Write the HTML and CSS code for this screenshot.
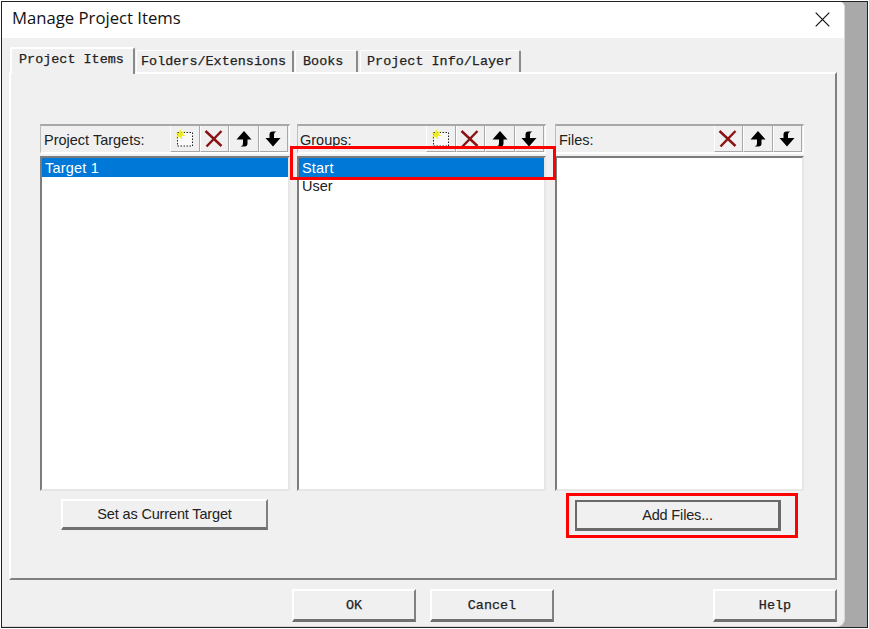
FILE: index.html
```html
<!DOCTYPE html>
<html lang="en">
<head>
<meta charset="utf-8">
<title>Manage Project Items</title>
<link rel="stylesheet" href="styles.css">
</head>
<body>
<svg class="defs" width="0" height="0" aria-hidden="true">
  <symbol id="i-new" viewBox="0 0 20 20">
    <rect x="2.500" y="3.500" width="15" height="13.500" fill="#fafafa" stroke="#222" stroke-dasharray="1.500 1.500"/>
    <path d="M5.500 0l1 3.500 3.500-1.500-2 3 2.500 1.500-3.500.5-.5 3.500-2-3-3.500 1.500 1.500-3.500-2.500-2 3.500.5z" fill="#eeea28"/>
  </symbol>
  <symbol id="i-del" viewBox="0 0 20 20">
    <path d="M1.500 2l16 15M17.500 2l-15 15.500" stroke="#8a1212" stroke-width="2.400" fill="none"/>
  </symbol>
  <symbol id="i-up" viewBox="0 0 16 16">
    <path d="M8 0L15.500 8.500H11.500V12.500Q11.500 15.500 8.500 15.500H4.500Q7 15 7 12V8.500H.5z" fill="#000"/>
  </symbol>
  <symbol id="i-down" viewBox="0 0 16 16">
    <path d="M8 15.500L.5 7H4.500V3.500Q4.500 .5 7.500 .5H11.500Q9 1 9 4V7H15.500z" fill="#000"/>
  </symbol>
</svg>
<div class="frame">
  <div class="dialog">
    <header class="titlebar">
      <span class="title">Manage Project Items</span>
      <svg class="close" width="15" height="15" viewBox="0 0 15 15"><path d="M.7.7l13.600 13.600M14.300.7L.7 14.300" stroke="#111" stroke-width="1.200" fill="none"/></svg>
    </header>
    <div class="body">
      <nav class="tabs">
        <span class="tab active">Project Items</span>
        <span class="tab t-folders">Folders/Extensions</span>
        <span class="tab t-books">Books</span>
        <span class="tab t-info">Project Info/Layer</span>
      </nav>
      <section class="panel">
        <div class="columns">
          <div class="col col-targets">
            <div class="head">
              <span class="head-label">Project Targets:</span>
              <span class="tool"><svg width="20" height="20"><use href="#i-new"/></svg></span>
              <span class="tool"><svg width="20" height="20"><use href="#i-del"/></svg></span>
              <span class="tool"><svg width="16" height="16"><use href="#i-up"/></svg></span>
              <span class="tool"><svg width="16" height="16"><use href="#i-down"/></svg></span>
            </div>
            <ul class="list">
              <li class="selected">Target 1</li>
            </ul>
          </div>
          <div class="col col-groups">
            <div class="head">
              <span class="head-label">Groups:</span>
              <span class="tool"><svg width="20" height="20"><use href="#i-new"/></svg></span>
              <span class="tool"><svg width="20" height="20"><use href="#i-del"/></svg></span>
              <span class="tool"><svg width="16" height="16"><use href="#i-up"/></svg></span>
              <span class="tool"><svg width="16" height="16"><use href="#i-down"/></svg></span>
            </div>
            <ul class="list">
              <li class="selected">Start</li>
              <li>User</li>
            </ul>
          </div>
          <div class="col">
            <div class="head">
              <span class="head-label">Files:</span>
              <span class="tool"><svg width="20" height="20"><use href="#i-del"/></svg></span>
              <span class="tool"><svg width="16" height="16"><use href="#i-up"/></svg></span>
              <span class="tool"><svg width="16" height="16"><use href="#i-down"/></svg></span>
            </div>
            <ul class="list"></ul>
          </div>
        </div>
        <div class="panel-actions">
          <button class="btn btn-target" type="button">Set as Current Target</button>
          <button class="btn btn-add" type="button">Add Files...</button>
        </div>
      </section>
      <footer class="footer">
        <button class="btn mono b-ok" type="button">OK</button>
        <button class="btn mono b-cancel" type="button">Cancel</button>
        <button class="btn mono b-help" type="button">Help</button>
      </footer>
    </div>
  </div>
  <div class="mark mark-group"></div>
  <div class="mark mark-add"></div>
</div>
</body>
</html>
```
FILE: styles.css
```css
* { box-sizing: border-box; }
html, body { margin: 0; padding: 0; background: #fff; }
.defs { position: absolute; }
body { padding: 1px 0 0 1px; font-family: "Liberation Sans", Arial, sans-serif; color: #111; }

.frame {
  position: relative;
  width: 867px;
  height: 627px;
  border: 1px solid #222;
  background: #a9a9a9;
}
.dialog {
  width: 843px;
  height: 625px;
  background: #f0f0f0;
  border-radius: 0 5px 8px 0;
  border-right: 1px solid #d8d8d8;
  border-bottom: 1px solid #d8d8d8;
  overflow: hidden;
}
.titlebar {
  height: 36px;
  background: #fff;
  display: flex;
  align-items: center;
  justify-content: space-between;
  padding: 0 14px 6px 10px;
}
.title { font-family: "Open Sans", "Noto Sans", sans-serif; font-size: 16.700px; color: #111; }
.close { display: block; margin-top: 4px; }

.body { padding: 9px 7px 0; }
.tabs { display: flex; align-items: flex-end; height: 25px; padding-left: 1px; }
.tab {
  font-family: "Liberation Mono", monospace;
  font-size: 13.450px;
  -webkit-text-stroke: .25px #222;
  color: #222;
  background: #f0f0f0;
  height: 22px;
  line-height: 22px;
  border-top: 1px solid #fff;
  border-left: 1px solid #fff;
  border-right: 2px solid #8a8a8a;
  border-radius: 2px 2px 0 0;
  padding-left: 4px;
  white-space: nowrap;
}
.tab.active {
  position: relative;
  z-index: 1;
  width: 125px;
  height: 27px;
  line-height: 22px;
  margin-bottom: -2px;
  padding-left: 7px;
  border-top: 2px solid #fff;
  border-left: 2px solid #fff;
}
.t-folders { width: 158px; margin-left: 1px; }
.t-books { width: 63px; margin-left: 1px; padding-left: 7px; }
.t-info { width: 161px; margin-left: 2px; padding-left: 6px; }

.panel {
  width: 828px;
  height: 508px;
  border-top: 2px solid #fff;
  border-left: 2px solid #fff;
  border-right: 2px solid #808080;
  border-bottom: 2px solid #808080;
  padding: 50px 0 0 29px;
}
.columns { display: flex; }
.col { width: 249px; }
.col-targets { width: 250px; margin-right: 7px; }
.col-groups { margin-right: 9px; }
.head {
  height: 30px;
  display: flex;
  align-items: stretch;
  border-top: 2px solid #a8a8a8;
  border-bottom: 2px solid #fff;
  border-left: 1px solid #bdbdbd;
  border-right: 1px solid #fff;
  padding-right: 1px;
}
.head-label {
  flex: 1;
  font-size: 14.500px;
  line-height: 28px;
  padding-left: 3px;
  color: #222;
}
.col-groups .head-label { padding-left: 2px; }
.tool {
  width: 29.500px;
  display: flex;
  align-items: center;
  justify-content: center;
  border-right: 1px solid #a8a8a8;
  border-left: 1px solid #fff;
  border-bottom: 1px solid #a8a8a8;
}
.tool svg { display: block; }

.list {
  list-style: none;
  margin: 2px 0 0;
  padding: 0;
  height: 335px;
  background: #fff;
  border-top: 2px solid #7c7c7c;
  border-left: 2px solid #7c7c7c;
  border-right: 2px solid #e6e6e6;
  border-bottom: 2px solid #e6e6e6;
  font-size: 14.500px;
  color: #222;
}
.list li { height: 18px; line-height: 18px; padding-left: 3px; }
.list li.selected { height: 19px; background: #0078d7; color: #fff; line-height: 21px; letter-spacing: .2px; }

.panel-actions { display: flex; justify-content: space-between; margin-top: 8px; padding: 0 54px 0 21px; }
.btn {
  display: block;
  margin: 0;
  padding: 0;
  background: #f0f0f0;
  font-family: "Liberation Sans", Arial, sans-serif;
  font-size: 14.500px;
  letter-spacing: -.15px;
  color: #222;
  border-top: 2px solid #fff;
  border-left: 2px solid #fff;
  border-right: 2px solid #808080;
  border-bottom: 3px solid #707070;
}
.btn-target { width: 207px; height: 31px; }
.btn-add { width: 206px; height: 31px; border: 3px solid #6a6a6a; border-top-width: 2px; border-left-width: 2px; margin-top: 1px; }

.footer { display: flex; margin-top: 9px; padding-left: 283px; }
.mono { width: 124px; height: 33px; font-family: "Liberation Mono", monospace; font-size: 13.450px; -webkit-text-stroke: .25px #222; letter-spacing: 0; }
.b-cancel { margin-left: 14px; }
.b-help { margin-left: 159px; }

.mark { position: absolute; border: 3px solid #f00; }
.mark-group { left: 288px; top: 144px; width: 266px; height: 34px; }
.mark-add { left: 564px; top: 491px; width: 232px; height: 45px; }
```
